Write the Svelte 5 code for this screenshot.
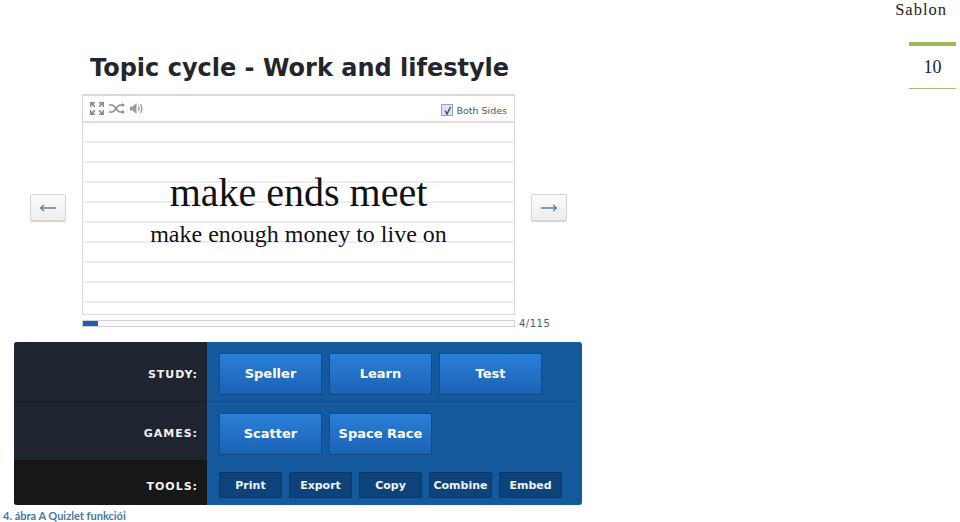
<script>
  const study = ['Speller', 'Learn', 'Test'];
  const games = ['Scatter', 'Space Race'];
  const tools = ['Print', 'Export', 'Copy', 'Combine', 'Embed'];
</script>

<div class="page">
  <div class="figure">
    <h1>Topic cycle - Work and lifestyle</h1>

    <div class="stage">
      <button class="arrow" type="button" aria-label="Previous">
        <svg width="18" height="8" viewBox="0 0 18 8"><path d="M17 4H2M5 1 1.5 4 5 7" fill="none" stroke="#5f7f9c" stroke-width="1.3" /></svg>
      </button>

      <div class="card">
        <div class="toolbar">
          <div class="icons">
            <svg width="14" height="13" viewBox="0 0 14 13" fill="#8b8b8b">
              <path d="M0 0h5v1.5H3L5.500 4 4.300 5.200 1.500 2.600V5H0zM14 0H9v1.500h2L8.500 4l1.200 1.200 2.800-2.600V5H14zM0 13h5v-1.500H3L5.500 9 4.300 7.800 1.500 10.400V8H0zM14 13H9v-1.500h2L8.500 9l1.200-1.200 2.800 2.600V8H14z" />
            </svg>
            <svg width="16" height="11" viewBox="0 0 16 11" fill="none" stroke="#8b8b8b" stroke-width="1.6">
              <path d="M0 2h3c3 0 5 7 8 7h2M0 9h3c3 0 5-7 8-7h2" />
              <path d="M13 0v4l3-2zM13 7v4l3-2z" fill="#8b8b8b" stroke="none" />
            </svg>
            <svg width="14" height="13" viewBox="0 0 14 13" fill="none" stroke="#9a9a9a" stroke-width="1.2">
              <path d="M0 4.500h2.500L6.500 1v11L2.500 8.500H0z" fill="#9a9a9a" stroke="none" />
              <path d="M8.500 4c.8 1.500.8 3.500 0 5M10.500 2c1.600 2.800 1.600 6.200 0 9" />
            </svg>
          </div>
          <label class="sides">
            <span class="check">
              <svg width="9" height="9" viewBox="0 0 9 9"><path d="M2 4.500 4 8 7.500 1" fill="none" stroke="#2d4f8c" stroke-width="1.500" /></svg>
            </span>
            Both Sides
          </label>
        </div>
        <div class="lines">
          <div class="term">make ends meet</div>
          <div class="definition">make enough money to live on</div>
        </div>
      </div>

      <button class="arrow" type="button" aria-label="Next">
        <svg width="18" height="8" viewBox="0 0 18 8"><path d="M1 4h15M13 1l3.500 3L13 7" fill="none" stroke="#5f7f9c" stroke-width="1.3" /></svg>
      </button>
    </div>

    <div class="progress-row">
      <div class="progress"><div class="fill" style="width: {(4 / 115) * 100}%"></div></div>
      <span class="count">4/115</span>
    </div>

    <div class="panel">
      <div class="row study">
        <div class="name">STUDY:</div>
        <div class="actions">
          {#each study as item}
            <button class="mode" type="button">{item}</button>
          {/each}
        </div>
      </div>
      <div class="row games">
        <div class="name">GAMES:</div>
        <div class="actions">
          {#each games as item}
            <button class="mode" type="button">{item}</button>
          {/each}
        </div>
      </div>
      <div class="row tools">
        <div class="name">TOOLS:</div>
        <div class="actions">
          {#each tools as item}
            <button class="tool" type="button">{item}</button>
          {/each}
        </div>
      </div>
    </div>

    <p class="caption">4. ábra A Quizlet funkciói</p>
  </div>

  <aside class="side">
    <div class="running">Sablon</div>
    <div class="pagenum">10</div>
  </aside>
</div>

<style>
  :global(body) {
    margin: 0;
    background: #fff;
  }

  .page {
    display: flex;
    justify-content: space-between;
    width: 960px;
    height: 522px;
    overflow: hidden;
  }

  .figure {
    display: flex;
    flex-direction: column;
    width: 583px;
  }

  h1 {
    margin: 54px 0 0 90px;
    font: 700 24px/29px "DejaVu Sans", sans-serif;
    color: #24262b;
    white-space: nowrap;
  }

  .stage {
    display: flex;
    align-items: center;
    gap: 16px;
    margin: 11px 0 0 30px;
  }

  .arrow {
    display: flex;
    align-items: center;
    justify-content: center;
    width: 36px;
    height: 27px;
    padding: 0;
    margin-top: 6px;
    background: linear-gradient(#fbfbfb, #eeeeee);
    border: 1px solid #d5d5d5;
    border-radius: 2px;
    box-shadow: 0 1px 1px #cfcfcf;
  }

  .card {
    box-sizing: border-box;
    width: 433px;
    height: 221px;
    background: #fff;
    border: 1px solid #d8d8de;
    border-top-width: 2px;
  }

  .toolbar {
    box-sizing: border-box;
    display: flex;
    align-items: center;
    justify-content: space-between;
    height: 27px;
    padding: 0 7px;
    border-bottom: 2px solid #f0d8de;
  }

  .icons {
    display: flex;
    align-items: center;
    gap: 5px;
    margin-top: -1px;
  }

  .sides {
    display: flex;
    align-items: center;
    gap: 3px;
    margin-top: 3px;
    font: 9.5px "DejaVu Sans", sans-serif;
    color: #55585e;
  }

  .check {
    box-sizing: border-box;
    display: flex;
    align-items: center;
    justify-content: center;
    width: 12px;
    height: 12px;
    background: #dfe3f0;
    border: 1px solid #9a9eae;
  }

  .lines {
    height: 190px;
    padding-top: 1px;
    text-align: center;
    font-family: "Liberation Serif", serif;
    color: #111;
    background: repeating-linear-gradient(#fff 0 18px, #eceef7 18px 20px);
  }

  .term {
    margin-top: 48px;
    font-size: 40px;
    line-height: 42px;
  }

  .definition {
    margin-top: 2px;
    font-size: 24px;
    line-height: 36px;
  }

  .progress-row {
    display: flex;
    align-items: center;
    gap: 4px;
    height: 7px;
    margin: 5px 0 0 82px;
    font: 10px "DejaVu Sans", sans-serif;
    color: #55585e;
  }

  .progress {
    box-sizing: border-box;
    width: 433px;
    height: 7px;
    border: 1px solid #d0d0d0;
    background: #fafafa;
  }

  .fill {
    height: 100%;
    background: #1f5fb0;
  }

  .count {
    letter-spacing: 0.5px;
  }

  .panel {
    display: flex;
    flex-direction: column;
    width: 568px;
    height: 164px;
    margin: 15px 0 0 14px;
    border-radius: 3px;
    overflow: hidden;
    background: #14599c;
    font-family: "DejaVu Sans", sans-serif;
    font-weight: 700;
  }

  .row {
    display: grid;
    grid-template-columns: 193px 1fr;
  }

  .study {
    height: 60px;
  }

  .games {
    height: 59px;
  }

  .tools {
    height: 45px;
  }

  .name {
    display: flex;
    align-items: center;
    justify-content: flex-end;
    padding: 6px 9px 0 0;
    background: #1f2530;
    color: #f2f2f2;
    font-size: 11px;
    letter-spacing: 1px;
  }

  .tools .name {
    background: #171717;
    padding-top: 7px;
  }

  .study .name,
  .study .actions {
    border-bottom: 1px solid #151b26;
    box-sizing: border-box;
  }

  .study .actions {
    border-bottom-color: #1a4f88;
  }

  .actions {
    display: flex;
    align-items: flex-start;
    gap: 7px;
    padding: 11px 0 0 12px;
  }

  button {
    font-family: inherit;
    font-weight: inherit;
  }

  .mode {
    width: 103px;
    height: 42px;
    padding: 0 0 1px;
    color: #fff;
    font-size: 13px;
    background: linear-gradient(#2a80d8, #1b62b4);
    border: 1px solid #124a85;
  }

  .tool {
    width: 63px;
    height: 26px;
    padding: 0;
    margin-top: 1px;
    color: #f0f4f8;
    font-size: 11px;
    background: #0d4378;
    border: 1px solid #0b3a68;
  }

  .caption {
    margin: 4px 0 0 3px;
    font: 700 11px/13px Lato, sans-serif;
    color: #4579aa;
    white-space: nowrap;
  }

  .side {
    display: flex;
    flex-direction: column;
    align-items: flex-end;
    width: 60px;
    padding-right: 4px;
  }

  .running {
    margin-right: 9px;
    font: 16.5px/19px "Liberation Serif", serif;
    letter-spacing: 1px;
    color: #222;
    white-space: nowrap;
  }

  .pagenum {
    box-sizing: border-box;
    width: 47px;
    height: 47px;
    margin-top: 23px;
    border-top: 4px solid #9bbb59;
    border-bottom: 1px solid #a9bd78;
    font: 18px/42px "Liberation Serif", serif;
    text-align: center;
    color: #222;
  }
</style>
